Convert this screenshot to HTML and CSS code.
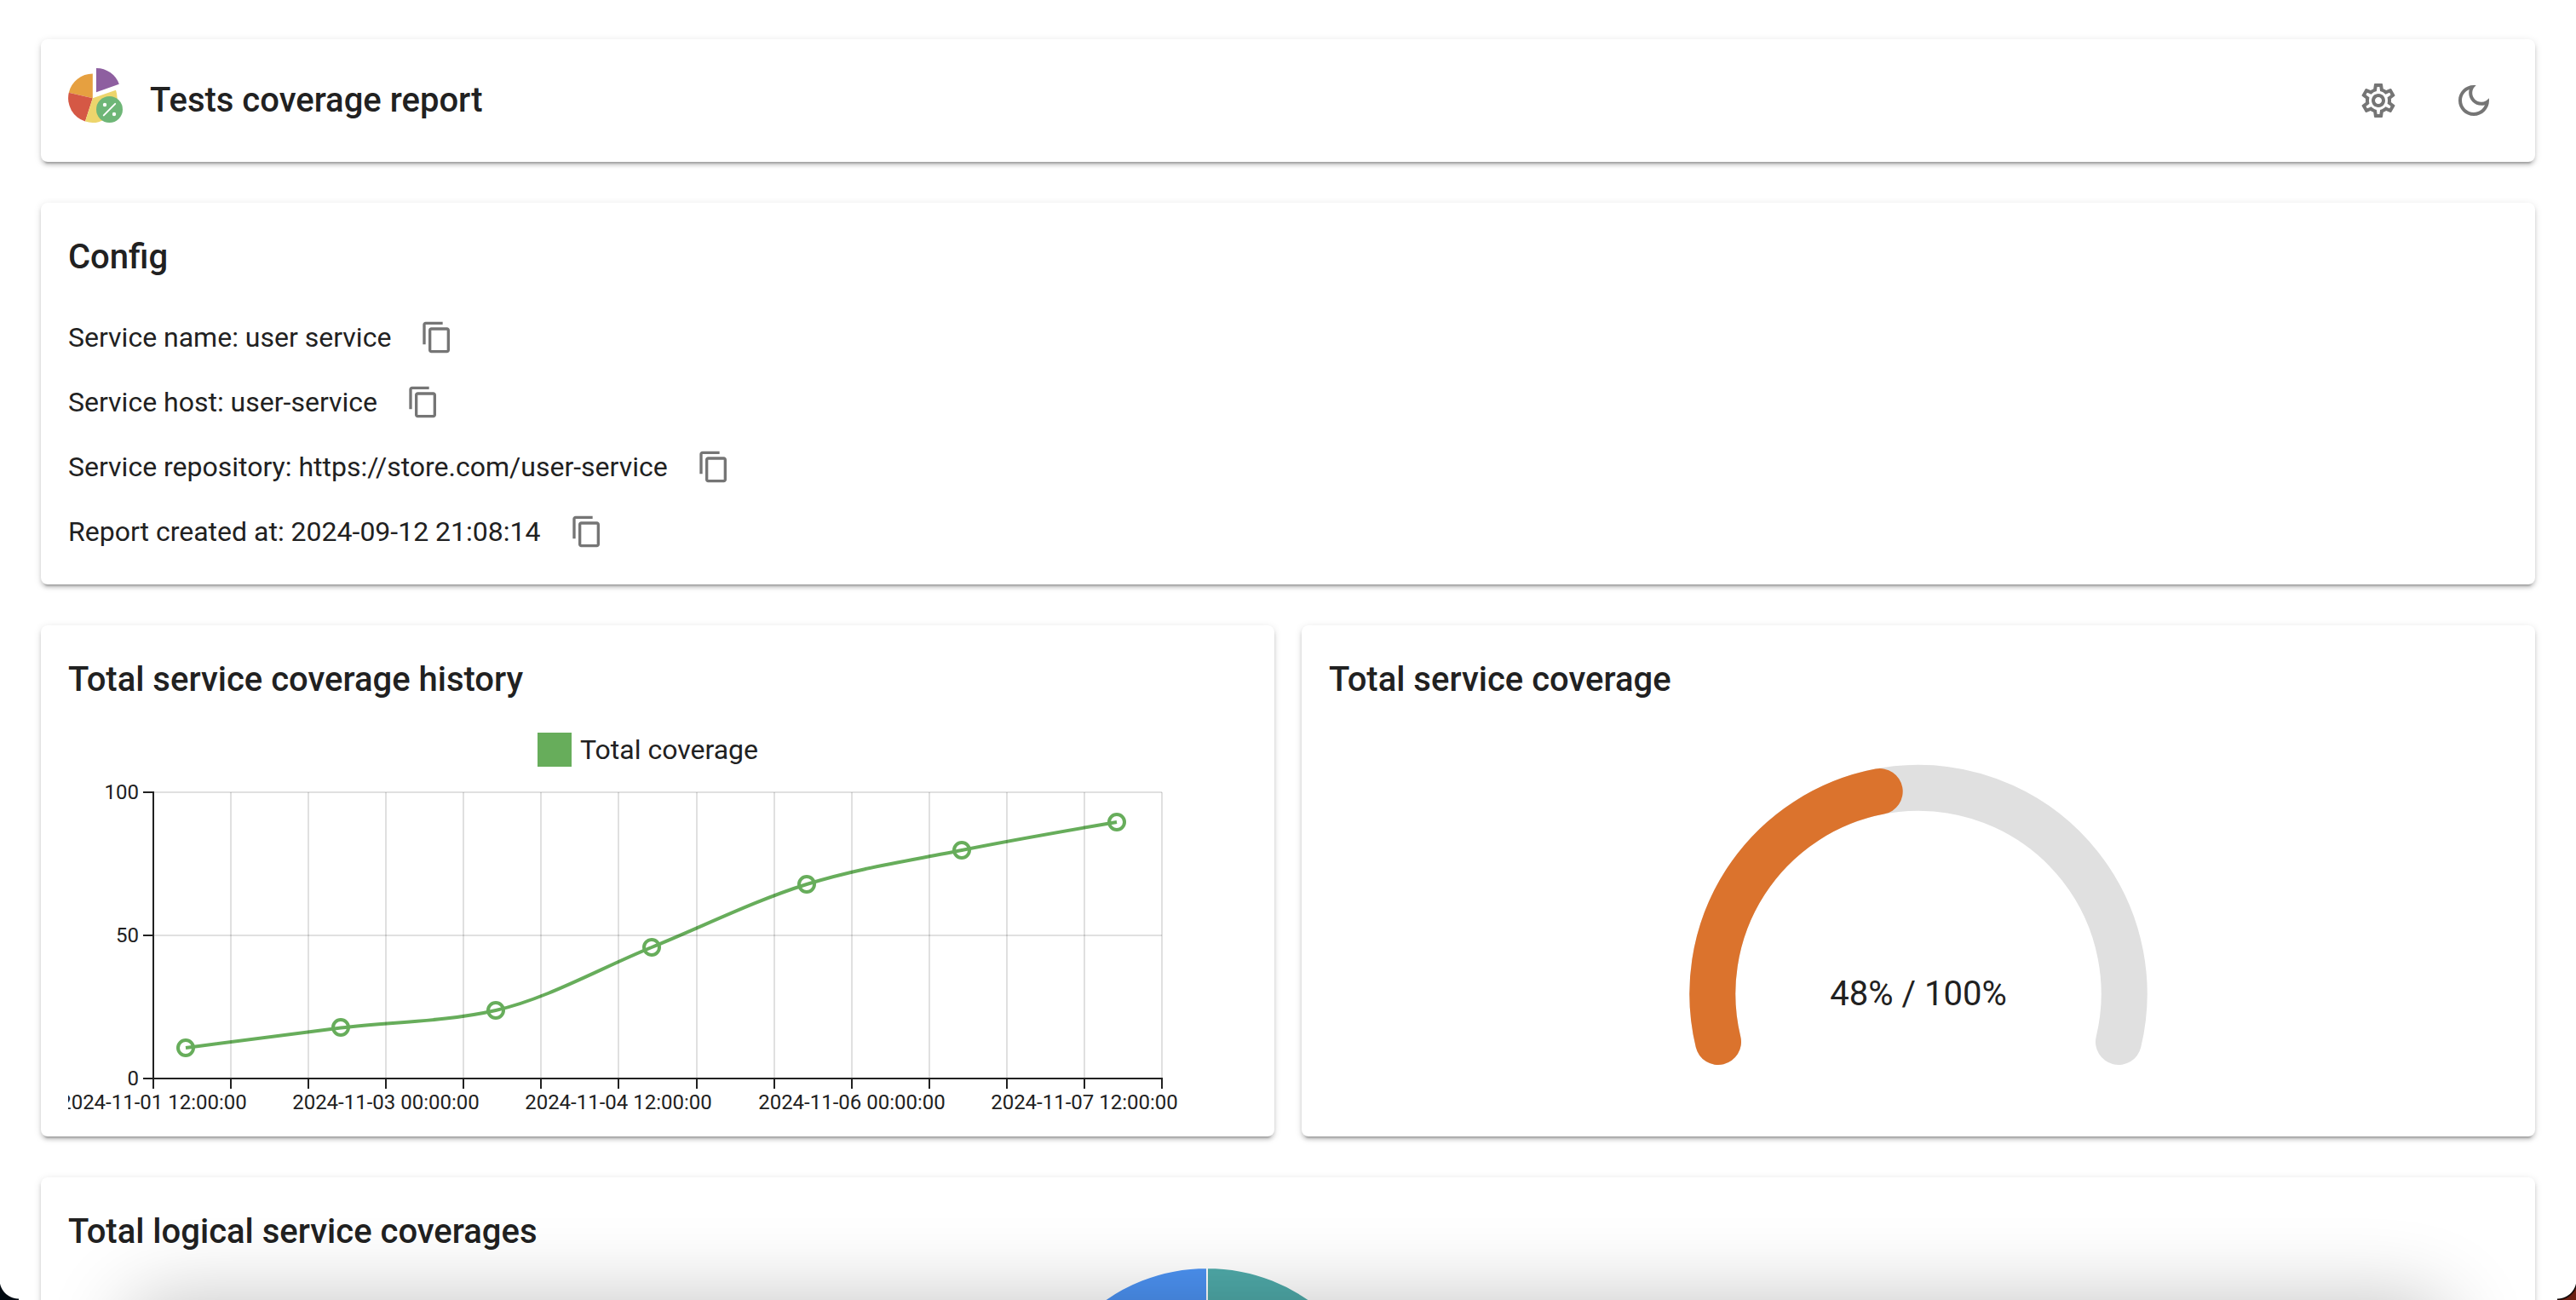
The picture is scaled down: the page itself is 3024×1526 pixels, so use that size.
FILE: index.html
```html
<!DOCTYPE html>
<html lang="en">
<head>
  <meta charset="utf-8">
  <meta name="viewport" content="width=device-width, initial-scale=1">
  <title>Tests coverage report</title>
  <link rel="stylesheet" href="styles.css">
</head>
<body>
  <svg class="sprite" aria-hidden="true">
    <symbol id="icon-copy" viewBox="0 0 24 24">
      <path d="M16 1H4c-1.1 0-2 .9-2 2v14h2V3h12V1zm3 4H8c-1.1 0-2 .9-2 2v14c0 1.1.9 2 2 2h11c1.1 0 2-.9 2-2V7c0-1.1-.9-2-2-2zm0 16H8V7h11v14z"/>
    </symbol>
  </svg>

  <div class="page">
    <header class="card header">
      <div class="logo">
        <svg class="logo-image" viewBox="0 0 64 64" aria-hidden="true">
          <path fill="#e6a040" d="M28.8 35.3V6.5A28.8 28.8 0 0 0 .8 28.7z"/>
          <path fill="#d55845" d="M28.8 35.3L.8 28.7A28.8 28.8 0 0 0 20 62.6z"/>
          <path fill="#edd56c" d="M28.8 35.3L20 62.6A28.8 28.8 0 0 0 56 25.7z"/>
          <path fill="#8e5fa0" d="M33 28.3V0A28.3 28.3 0 0 1 59.8 18.7z"/>
          <circle cx="48.5" cy="48.5" r="15.5" fill="#6eb677"/>
          <path d="M41.8 55.4L55.2 41.9" stroke="#fff" stroke-width="2" stroke-linecap="round"/>
          <circle cx="43" cy="43" r="2.2" fill="#fff"/>
          <circle cx="54" cy="54" r="2.2" fill="#fff"/>
        </svg>
      </div>
      <h1 class="title">Tests coverage report</h1>
      <div class="actions">
        <button class="icon-button" type="button" aria-label="Settings">
          <svg class="icon" viewBox="0 0 24 24" aria-hidden="true">
            <path d="M19.43 12.98c.04-.32.07-.64.07-.98 0-.34-.03-.66-.07-.98l2.11-1.65c.19-.15.24-.42.12-.64l-2-3.46c-.09-.16-.26-.25-.44-.25-.06 0-.12.01-.17.03l-2.49 1c-.52-.4-1.08-.73-1.69-.98l-.38-2.65C14.46 2.18 14.25 2 14 2h-4c-.25 0-.46.18-.49.42l-.38 2.65c-.61.25-1.17.59-1.69.98l-2.49-1c-.06-.02-.12-.03-.18-.03-.17 0-.34.09-.43.25l-2 3.46c-.13.22-.07.49.12.64l2.11 1.65c-.04.32-.07.65-.07.98 0 .33.03.66.07.98l-2.11 1.65c-.19.15-.24.42-.12.64l2 3.46c.09.16.26.25.44.25.06 0 .12-.01.17-.03l2.49-1c.52.4 1.08.73 1.69.98l.38 2.65c.03.24.24.42.49.42h4c.25 0 .46-.18.49-.42l.38-2.65c.61-.25 1.17-.59 1.69-.98l2.49 1c.06.02.12.03.18.03.17 0 .34-.09.43-.25l2-3.46c.12-.22.07-.49-.12-.64l-2.11-1.65zm-1.98-1.71c.04.31.05.52.05.73 0 .21-.02.43-.05.73l-.14 1.13.89.7 1.08.84-.7 1.21-1.27-.51-1.04-.42-.9.68c-.43.32-.84.56-1.25.73l-1.06.43-.16 1.13-.2 1.35h-1.4l-.19-1.35-.16-1.13-1.06-.43c-.43-.18-.83-.41-1.23-.71l-.91-.7-1.06.43-1.27.51-.7-1.21 1.08-.84.89-.7-.14-1.13c-.03-.31-.05-.54-.05-.74s.02-.43.05-.73l.14-1.13-.89-.7-1.08-.84.7-1.21 1.27.51 1.04.42.9-.68c.43-.32.84-.56 1.25-.73l1.06-.43.16-1.13.2-1.35h1.39l.19 1.35.16 1.13 1.06.43c.43.18.83.41 1.23.71l.91.7 1.06-.43 1.27-.51.7 1.21-1.07.85-.89.7.14 1.13zM12 8c-2.21 0-4 1.79-4 4s1.79 4 4 4 4-1.79 4-4-1.79-4-4-4zm0 6c-1.1 0-2-.9-2-2s.9-2 2-2 2 .9 2 2-.9 2-2 2z"/>
          </svg>
        </button>
        <button class="icon-button" type="button" aria-label="Dark theme">
          <svg class="icon" viewBox="0 0 24 24" aria-hidden="true">
            <path d="M9.37 5.51c-.18.64-.27 1.31-.27 1.99 0 4.08 3.32 7.4 7.4 7.4.68 0 1.35-.09 1.99-.27C17.45 17.19 14.93 19 12 19c-3.86 0-7-3.14-7-7 0-2.93 1.81-5.45 4.37-6.49zM12 3c-4.97 0-9 4.03-9 9s4.03 9 9 9 9-4.03 9-9c0-.46-.04-.92-.1-1.36-.98 1.37-2.58 2.26-4.4 2.26-2.98 0-5.4-2.42-5.4-5.4 0-1.81.89-3.42 2.26-4.4-.44-.06-.9-.1-1.36-.1z"/>
          </svg>
        </button>
      </div>
    </header>

    <main class="content">
      <section class="card">
        <h2 class="title">Config</h2>
        <ul class="config-list">
          <li class="config-row">
            <span>Service name: user service</span>
            <button class="icon-button small" type="button" aria-label="Copy service name"><svg class="icon" aria-hidden="true"><use href="#icon-copy"/></svg></button>
          </li>
          <li class="config-row">
            <span>Service host: user-service</span>
            <button class="icon-button small" type="button" aria-label="Copy service host"><svg class="icon" aria-hidden="true"><use href="#icon-copy"/></svg></button>
          </li>
          <li class="config-row">
            <span>Service repository: https://store.com/user-service</span>
            <button class="icon-button small" type="button" aria-label="Copy service repository"><svg class="icon" aria-hidden="true"><use href="#icon-copy"/></svg></button>
          </li>
          <li class="config-row">
            <span>Report created at: 2024-09-12 21:08:14</span>
            <button class="icon-button small" type="button" aria-label="Copy creation time"><svg class="icon" aria-hidden="true"><use href="#icon-copy"/></svg></button>
          </li>
        </ul>
      </section>

      <div class="columns">
        <section class="card">
          <h2 class="title">Total service coverage history</h2>
          <svg class="chart history" viewBox="0 0 1384 488" role="img" aria-label="Total coverage over time">
            <rect class="series-fill" x="551" y="30" width="40" height="40"/>
            <text class="legend-text" x="601" y="61">Total coverage</text>

            <g class="marks">
              <circle cx="138" cy="400" r="9"/>
              <circle cx="320" cy="376" r="9"/>
              <circle cx="502" cy="356" r="9"/>
              <circle cx="685" cy="282" r="9"/>
              <circle cx="867" cy="208" r="9"/>
              <circle cx="1049" cy="168" r="9"/>
              <circle cx="1231" cy="135" r="9"/>
            </g>
            <path class="series-line" d="M138 400C198.700 391.900 259.300 383.800 320 376.500C380.700 369.200 441.300 369.700 502 356C562.700 342.300 624.300 306.700 685 282C745.700 257.300 806.300 227 867 208C927.700 189 988.300 180.200 1049 168C1109.700 155.800 1170.300 145.400 1231 135"/>

            <path class="grid" d="M191 100V436"/>
            <path class="grid" d="M282 100V436"/>
            <path class="grid" d="M373 100V436"/>
            <path class="grid" d="M464 100V436"/>
            <path class="grid" d="M555 100V436"/>
            <path class="grid" d="M646 100V436"/>
            <path class="grid" d="M738 100V436"/>
            <path class="grid" d="M829 100V436"/>
            <path class="grid" d="M920 100V436"/>
            <path class="grid" d="M1011 100V436"/>
            <path class="grid" d="M1102 100V436"/>
            <path class="grid" d="M1193 100V436"/>
            <path class="grid" d="M1284 100V436"/>
            <path class="grid" d="M100 100H1284"/>
            <path class="grid" d="M100 268H1284"/>

            <path class="axis" d="M100 99V437M88 100H100M88 268H100M88 436H1285M100 436V448M191 436V448M282 436V448M373 436V448M464 436V448M555 436V448M646 436V448M738 436V448M829 436V448M920 436V448M1011 436V448M1102 436V448M1193 436V448M1284 436V448"/>

            <g class="tick-text tick-y">
              <text x="83" y="108">100</text>
              <text x="83" y="276">50</text>
              <text x="83" y="444">0</text>
            </g>
            <g class="tick-text tick-x">
              <text x="100" y="472">2024-11-01 12:00:00</text>
              <text x="373" y="472">2024-11-03 00:00:00</text>
              <text x="646" y="472">2024-11-04 12:00:00</text>
              <text x="920" y="472">2024-11-06 00:00:00</text>
              <text x="1193" y="472">2024-11-07 12:00:00</text>
            </g>
          </svg>
        </section>

        <section class="card">
          <h2 class="title">Total service coverage</h2>
          <svg class="chart" viewBox="0 0 1384 472" role="img" aria-label="48% of 100% covered">
            <path class="gauge-track" d="M457 393A241.700 241.700 0 1 1 927 393"/>
            <path class="gauge-value" d="M457 393A241.700 241.700 0 0 1 646.700 99.100"/>
            <text class="gauge-text" x="692" y="350">48% / 100%</text>
          </svg>
        </section>
      </div>

      <section class="card">
        <h2 class="title">Total logical service coverages</h2>
        <svg class="chart" viewBox="0 0 2864 472" role="img" aria-label="Logical coverage breakdown">
          <path fill="#4c92f2" stroke="#fff" stroke-width="2" d="M1337 219V10A209 209 0 0 0 1337 428z"/>
          <path fill="#4faaa9" stroke="#fff" stroke-width="2" d="M1337 219V10A209 209 0 0 1 1337 428z"/>
        </svg>
      </section>
    </main>
  </div>

  <div class="window-edge" aria-hidden="true">
    <span class="shade"></span>
    <span class="corner corner-left"></span>
    <span class="corner corner-right"></span>
  </div>
</body>
</html>
```
FILE: styles.css
```css
* {
  box-sizing: border-box;
}

body {
  margin: 0;
  background: #fff;
  color: #212121;
  font-family: Roboto, "Liberation Sans", sans-serif;
  font-size: 32px;
  line-height: 48px;
}

.sprite {
  display: none;
}

.page {
  display: flex;
  flex-direction: column;
  gap: 48px;
  height: 100vh;
  padding: 46px 48px 48px;
  overflow-y: auto;
  scrollbar-width: none;
}

.content {
  display: flex;
  flex-direction: column;
  gap: 48px;
}

.card {
  padding: 32px;
  border-radius: 8px;
  background: #fff;
  box-shadow:
    0 6px 2px -4px rgba(0, 0, 0, 0.2),
    0 4px 4px 0 rgba(0, 0, 0, 0.14),
    0 2px 10px 0 rgba(0, 0, 0, 0.12);
}

.title {
  margin: 0;
  font-size: 40px;
  font-weight: 500;
  line-height: 64px;
}

.header {
  display: flex;
  align-items: center;
  gap: 32px;
}

.logo {
  padding-bottom: 12px;
}

.logo-image {
  display: block;
  width: 64px;
  height: 64px;
}

.actions {
  display: flex;
  gap: 32px;
  margin-left: auto;
}

.icon-button {
  display: flex;
  padding: 16px;
  border: 0;
  border-radius: 50%;
  background: none;
  color: #757575;
  cursor: pointer;
}

.icon-button:hover {
  background: rgba(0, 0, 0, 0.04);
}

.icon {
  display: block;
  width: 48px;
  height: 48px;
  fill: currentColor;
}

.small {
  padding: 10px;
}

.small .icon {
  width: 40px;
  height: 40px;
}

.config-list {
  display: flex;
  flex-direction: column;
  gap: 16px;
  margin: 32px 0 0;
  padding: 0;
  list-style: none;
}

.config-row {
  display: flex;
  align-items: center;
  gap: 24px;
}

.columns {
  display: grid;
  grid-template-columns: 1fr 1fr;
  gap: 32px;
}

.chart {
  display: block;
  width: 100%;
  height: auto;
}

/* The date labels reach into the card's bottom padding. */
.history {
  margin-bottom: -16px;
}

.chart text {
  fill: #212121;
}

.series-fill {
  fill: #67ad5b;
}

.series-line {
  fill: none;
  stroke: #67ad5b;
  stroke-width: 4px;
}

.marks {
  fill: #fff;
  stroke: #67ad5b;
  stroke-width: 4px;
}

.grid {
  stroke: rgba(0, 0, 0, 0.12);
  stroke-width: 2px;
}

.axis {
  fill: none;
  stroke: #212121;
  stroke-width: 2px;
}

.tick-text {
  font-size: 24px;
}

.tick-y {
  text-anchor: end;
}

.tick-x {
  text-anchor: middle;
}

.gauge-track,
.gauge-value {
  fill: none;
  stroke: #e0e0e0;
  stroke-linecap: round;
  stroke-width: 54px;
}

.gauge-value {
  stroke: #db732d;
}

.gauge-text {
  font-size: 40px;
  text-anchor: middle;
}

/* Window frame: rounded bottom corners and the shade above the lower edge. */
.window-edge {
  position: fixed;
  inset: 0;
  overflow: hidden;
  pointer-events: none;
}

.shade {
  position: absolute;
  top: 100%;
  left: 150px;
  right: 150px;
  height: 200px;
  border-radius: 40px;
  box-shadow: 0 0 96px 0 rgba(0, 0, 0, 0.24);
}

.corner {
  position: absolute;
  bottom: 0;
  width: 22px;
  height: 24px;
}

.corner-left {
  left: 0;
  background: radial-gradient(circle at 100% 0, transparent 22px, #020a12 23px);
}

.corner-right {
  right: 0;
  background: radial-gradient(circle at 0 0, transparent 22px, #000 23px, #6b1f12 25px);
}
```
